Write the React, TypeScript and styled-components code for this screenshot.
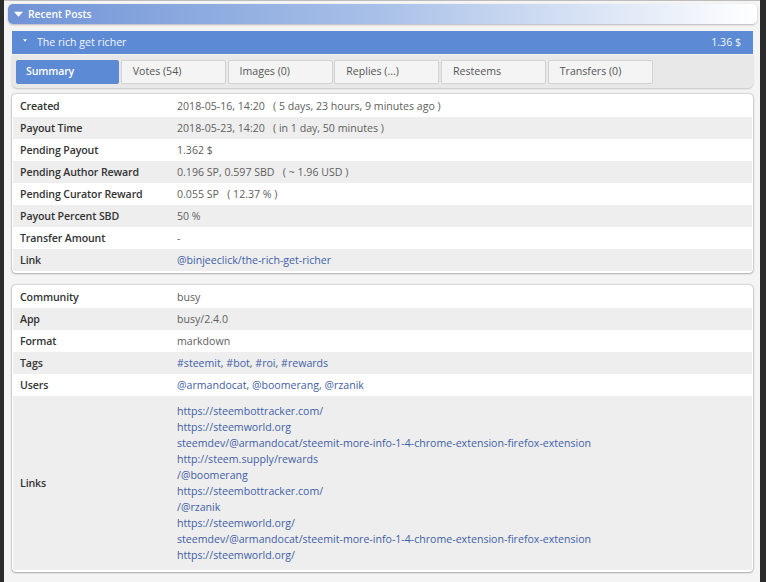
import React, { FC } from 'react'
import styled, { createGlobalStyle } from 'styled-components'

const GlobalStyle = createGlobalStyle`
  html, body {
    margin: 0;
    padding: 0;
    height: 582px;
    overflow: hidden;
    background: #2b2b2b;
    font-family: "Open Sans", "Liberation Sans", sans-serif;
    font-size: 10.6px;
    color: #555555;
  }
`

const summaryRows = [
  { label: 'Created', value: '2018-05-16, 14:20   ( 5 days, 23 hours, 9 minutes ago )' },
  { label: 'Payout Time', value: '2018-05-23, 14:20   ( in 1 day, 50 minutes )' },
  { label: 'Pending Payout', value: '1.362 $' },
  { label: 'Pending Author Reward', value: '0.196 SP, 0.597 SBD   ( ~ 1.96 USD )' },
  { label: 'Pending Curator Reward', value: '0.055 SP   ( 12.37 % )' },
  { label: 'Payout Percent SBD', value: '50 %' },
  { label: 'Transfer Amount', value: '-' },
]

const metaRows = [
  { label: 'Community', value: 'busy' },
  { label: 'App', value: 'busy/2.4.0' },
  { label: 'Format', value: 'markdown' },
]

const links = [
  'https://steembottracker.com/',
  'https://steemworld.org',
  'steemdev/@armandocat/steemit-more-info-1-4-chrome-extension-firefox-extension',
  'http://steem.supply/rewards',
  '/@boomerang',
  'https://steembottracker.com/',
  '/@rzanik',
  'https://steemworld.org/',
  'steemdev/@armandocat/steemit-more-info-1-4-chrome-extension-firefox-extension',
  'https://steemworld.org/',
]

const tabs = ['Votes (54)', 'Images (0)', 'Replies (...)', 'Resteems', 'Transfers (0)']

const App: FC = () => (
  <>
    <GlobalStyle />
    <Page>
      <SectionHeader>
        <HeaderCaret viewBox="0 0 10 6">
          <path d="M0 0.5h10L5 6z" fill="#ffffff" />
        </HeaderCaret>
        Recent Posts
      </SectionHeader>
      <PostBar>
        <PostTitle>
          <PostCaret viewBox="0 0 6 4">
            <path d="M0 0h6L3 4z" fill="#ffffff" />
          </PostCaret>
          The rich get richer
        </PostTitle>
        <span>1.36 $</span>
      </PostBar>
      <TabBar>
        <Tab $active>Summary</Tab>
        {tabs.map((t) => (
          <Tab key={t}>{t}</Tab>
        ))}
      </TabBar>
      <Card>
        {summaryRows.map((r) => (
          <Row key={r.label}>
            <Label>{r.label}</Label>
            <Value>{r.value}</Value>
          </Row>
        ))}
        <Row>
          <Label>Link</Label>
          <Value>
            <Anchor>@binjeeclick/the-rich-get-richer</Anchor>
          </Value>
        </Row>
      </Card>
      <Card>
        {metaRows.map((r) => (
          <Row key={r.label}>
            <Label>{r.label}</Label>
            <Value>{r.value}</Value>
          </Row>
        ))}
        <Row>
          <Label>Tags</Label>
          <Value>
            <Anchor>#steemit</Anchor>, <Anchor>#bot</Anchor>, <Anchor>#roi</Anchor>, <Anchor>#rewards</Anchor>
          </Value>
        </Row>
        <Row>
          <Label>Users</Label>
          <Value>
            <Anchor>@armandocat</Anchor>, <Anchor>@boomerang</Anchor>, <Anchor>@rzanik</Anchor>
          </Value>
        </Row>
        <LinksRow>
          <Label>Links</Label>
          <LinkList>
            {links.map((l, i) => (
              <Anchor key={i}>{l}</Anchor>
            ))}
          </LinkList>
        </LinksRow>
      </Card>
    </Page>
  </>
)

const Page = styled.div`
  box-sizing: border-box;
  width: 756px;
  height: 582px;
  margin-left: 4px;
  padding: 3px 0 0 4px;
  background: #f4f4f4;
  border-top: 1px solid #bdbdbd;
  overflow: hidden;
`

const SectionHeader = styled.div`
  display: flex;
  align-items: center;
  gap: 5px;
  box-sizing: border-box;
  width: 749px;
  height: 20px;
  padding-left: 6px;
  border-radius: 5px;
  background: linear-gradient(to right, #6f93d6 0%, #a9c1e8 50%, #ffffff 100%);
  box-shadow: 0 1px 2px rgba(0, 0, 0, 0.25);
  color: #ffffff;
  font-weight: 600;
  font-size: 10.3px;
`

const HeaderCaret = styled.svg`
  width: 9px;
  height: 6px;
`

const PostBar = styled.div`
  display: flex;
  align-items: center;
  justify-content: space-between;
  box-sizing: border-box;
  width: 741px;
  height: 23px;
  margin: 7px 0 0 4px;
  padding: 0 12px 2px 11px;
  background: #5c8ad4;
  color: #f2f6fc;
`

const PostTitle = styled.span`
  display: flex;
  align-items: center;
  gap: 10px;
`

const PostCaret = styled.svg`
  width: 4px;
  height: 3px;
  margin-bottom: 2px;
`

const TabBar = styled.div`
  display: flex;
  gap: 1.75px;
  box-sizing: border-box;
  width: 741px;
  height: 33px;
  margin: 1px 0 0 4px;
  padding: 5px 4px 4px;
  border-radius: 0 0 5px 5px;
  background: #e8e8e8;
  box-shadow: 0 1px 2px rgba(0, 0, 0, 0.2);
`

const Tab = styled.div<{ $active?: boolean }>`
  display: flex;
  align-items: center;
  box-sizing: border-box;
  width: ${(p) => (p.$active ? 103 : 105)}px;
  height: 24px;
  padding: 0 0 2px ${(p) => (p.$active ? 9 : 11)}px;
  border-radius: 2px;
  border: 1px solid ${(p) => (p.$active ? '#5c8ad4' : '#d2d2d2')};
  background: ${(p) => (p.$active ? '#5c8ad4' : '#f4f4f4')};
  color: ${(p) => (p.$active ? '#ffffff' : '#555555')};
  font-weight: ${(p) => (p.$active ? 600 : 400)};
  letter-spacing: ${(p) => (p.$active ? '-0.15px' : '0')};
`

const Card = styled.div`
  width: 741px;
  box-sizing: border-box;
  margin: 6px 0 12px 4px;
  padding: 1px 1px 2px;
  border-radius: 4px;
  background: #ffffff;
  box-shadow: 0 0 2px rgba(0, 0, 0, 0.4), 0 1px 2px rgba(0, 0, 0, 0.2);
`

const Row = styled.div`
  display: grid;
  grid-template-columns: 164px 1fr;
  align-items: center;
  height: 22px;
  background: #ffffff;

  &:nth-child(even) {
    background: #eeeeee;
  }
`

const LinksRow = styled(Row)`
  height: 174px;
`

const Label = styled.div`
  padding-left: 7px;
  color: #333333;
  font-weight: 600;
  letter-spacing: -0.12px;
`

const Value = styled.div`
  white-space: pre;
  color: #5e5e5e;
`

const LinkList = styled.div`
  display: flex;
  flex-direction: column;
  line-height: 16px;
`

const Anchor = styled.span`
  color: #3f5ea6;
`

export default App
